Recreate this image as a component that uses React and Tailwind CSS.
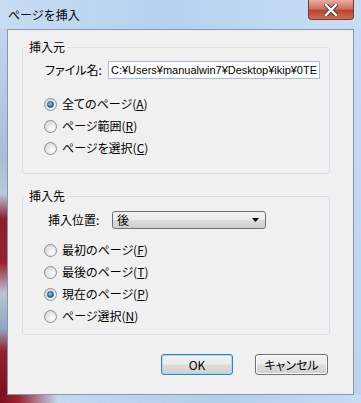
import React from 'react';

const jp = "font-['Noto_Sans_CJK_JP',sans-serif] [font-feature-settings:'palt']";

const Radio = ({ checked, label, accel }) => (
    <div className="flex items-center h-[22px] pl-[21px] gap-[5px]">
        <span className="w-[13px] h-[13px] rounded-full border border-[#8f8f8f] bg-[radial-gradient(circle_at_65%_70%,#ffffff,#e4e4e4_55%,#cfcfcf)] flex items-center justify-center shrink-0">
            {checked && (
                <span className="w-[7px] h-[7px] rounded-full border border-[#1d4d7e] bg-[radial-gradient(circle_at_40%_35%,#9ad4f7,#2a8ad8_50%,#0b4d8c)]"></span>
            )}
        </span>
        <span className="text-[12px] leading-none text-black">
            {label}(<span className="underline underline-offset-1">{accel}</span>)
        </span>
    </div>
);

const Button = ({ children, primary, width }) => (
    <div
        className={`h-[21px] ${width} rounded-[3px] border flex items-center justify-center text-[12px] text-black bg-[linear-gradient(to_bottom,#f2f2f2,#ebebeb_48%,#dddddd_52%,#cfcfcf)] ${
            primary ? 'border-[#3c7fb1] shadow-[inset_0_0_0_1px_#9fdcf5]' : 'border-[#707070] shadow-[inset_0_0_0_1px_#fafafa]'
        }`}
    >
        {children}
    </div>
);

const App = () => {
    return (
        <div className={`w-[361px] h-[403px] flex flex-col bg-[linear-gradient(to_bottom,#b9d3ee,#cfe2f5)] ${jp}`}>
            {/* Title bar */}
            <div className="h-[29px] flex items-start shrink-0 bg-[linear-gradient(to_right,#c7dcf2,#b5d1ef_45%,#c9def4)]">
                <div className="pl-2 pt-[6px] text-[12px] text-black [font-feature-settings:normal]">ページを挿入</div>
                <div className="ml-auto mr-[7px] w-[46px] h-[20px] rounded-b-[4px] border border-t-0 border-[#6e3b34] bg-[linear-gradient(to_bottom,#e9ad9f,#d0705e_45%,#c0442f_55%,#d36a4f)] flex items-center justify-center">
                    <svg width="14" height="12" viewBox="0 0 14 12">
                        <path d="M2 1 L12 11 M12 1 L2 11" stroke="#3b3b3b" strokeWidth="4.2" strokeLinecap="square" />
                        <path d="M2 1 L12 11 M12 1 L2 11" stroke="#ffffff" strokeWidth="2.4" strokeLinecap="square" />
                    </svg>
                </div>
            </div>

            {/* Middle */}
            <div className="flex flex-1">
                <div className="w-[7px] bg-[linear-gradient(to_bottom,#c2d7ec,#a9bed3_35%,#b7c9da_45%,#8e1c2a_52%,#9a2232_64%,#b8c5d2_72%,#8ea7c0_82%,#962030_88%,#7c1020)]"></div>

                {/* Client area */}
                <div className="flex-1 border border-[#8497ae] bg-[#f0f0f0] flex flex-col">
                    {/* 挿入元 */}
                    <fieldset className="ml-[14px] mt-[9px] w-[308px] border border-[#d5dfe5] rounded-[3px] pb-[14px]">
                        <legend className="ml-[4px] px-[2px] text-[12px] leading-[16px]">挿入元</legend>
                        <div className="flex items-center pl-[22px] mt-[6px]">
                            <span className="w-[63px] text-[12px]">ファイル名:</span>
                            <div className="w-[212px] h-[18px] border border-[#a5bdd6] bg-white flex items-center pl-[2px] overflow-hidden whitespace-nowrap font-['Liberation_Sans',sans-serif] text-[11px] text-black">
                                C:¥Users¥manualwin7¥Desktop¥ikip¥0TE
                            </div>
                        </div>
                        <div className="mt-[14px] flex flex-col">
                            <Radio checked label="全てのページ" accel="A" />
                            <Radio label="ページ範囲" accel="R" />
                            <Radio label="ページを選択" accel="C" />
                        </div>
                    </fieldset>

                    {/* 挿入先 */}
                    <fieldset className="ml-[14px] mt-[14px] w-[308px] border border-[#d5dfe5] rounded-[3px] pb-[7px]">
                        <legend className="ml-[4px] px-[2px] text-[12px] leading-[16px]">挿入先</legend>
                        <div className="flex items-center pl-[25px] mt-[7px]">
                            <span className="w-[64px] text-[12px]">挿入位置:</span>
                            <div className="w-[154px] h-[18px] rounded-[3px] border border-[#707070] bg-[linear-gradient(to_bottom,#f2f2f2,#ebebeb_48%,#dddddd_52%,#cfcfcf)] flex items-center pl-[4px] pr-[6px] text-[12px]">
                                <span>後</span>
                                <svg className="ml-auto" width="7" height="4" viewBox="0 0 7 4">
                                    <path d="M0 0 H7 L3.5 4 Z" fill="#000" />
                                </svg>
                            </div>
                        </div>
                        <div className="mt-[10px] flex flex-col">
                            <Radio label="最初のページ" accel="F" />
                            <Radio label="最後のページ" accel="T" />
                            <Radio checked label="現在のページ" accel="P" />
                            <Radio label="ページ選択" accel="N" />
                        </div>
                    </fieldset>

                    {/* Buttons */}
                    <div className="flex justify-end gap-[22px] pr-[25px] mt-[19px]">
                        <Button primary width="w-[72px]">OK</Button>
                        <Button width="w-[73px]">キャンセル</Button>
                    </div>
                </div>

                <div className="w-[7px] bg-[linear-gradient(to_bottom,#c6dcf2,#bcd4ee)]"></div>
            </div>

            {/* Bottom frame */}
            <div className="h-[8px] shrink-0 bg-[linear-gradient(to_right,#7c1020,#9a2030_5%,#c4d9ef_16%,#b3cde9_60%,#c8dcf1)]"></div>
        </div>
    );
};

export default App;
